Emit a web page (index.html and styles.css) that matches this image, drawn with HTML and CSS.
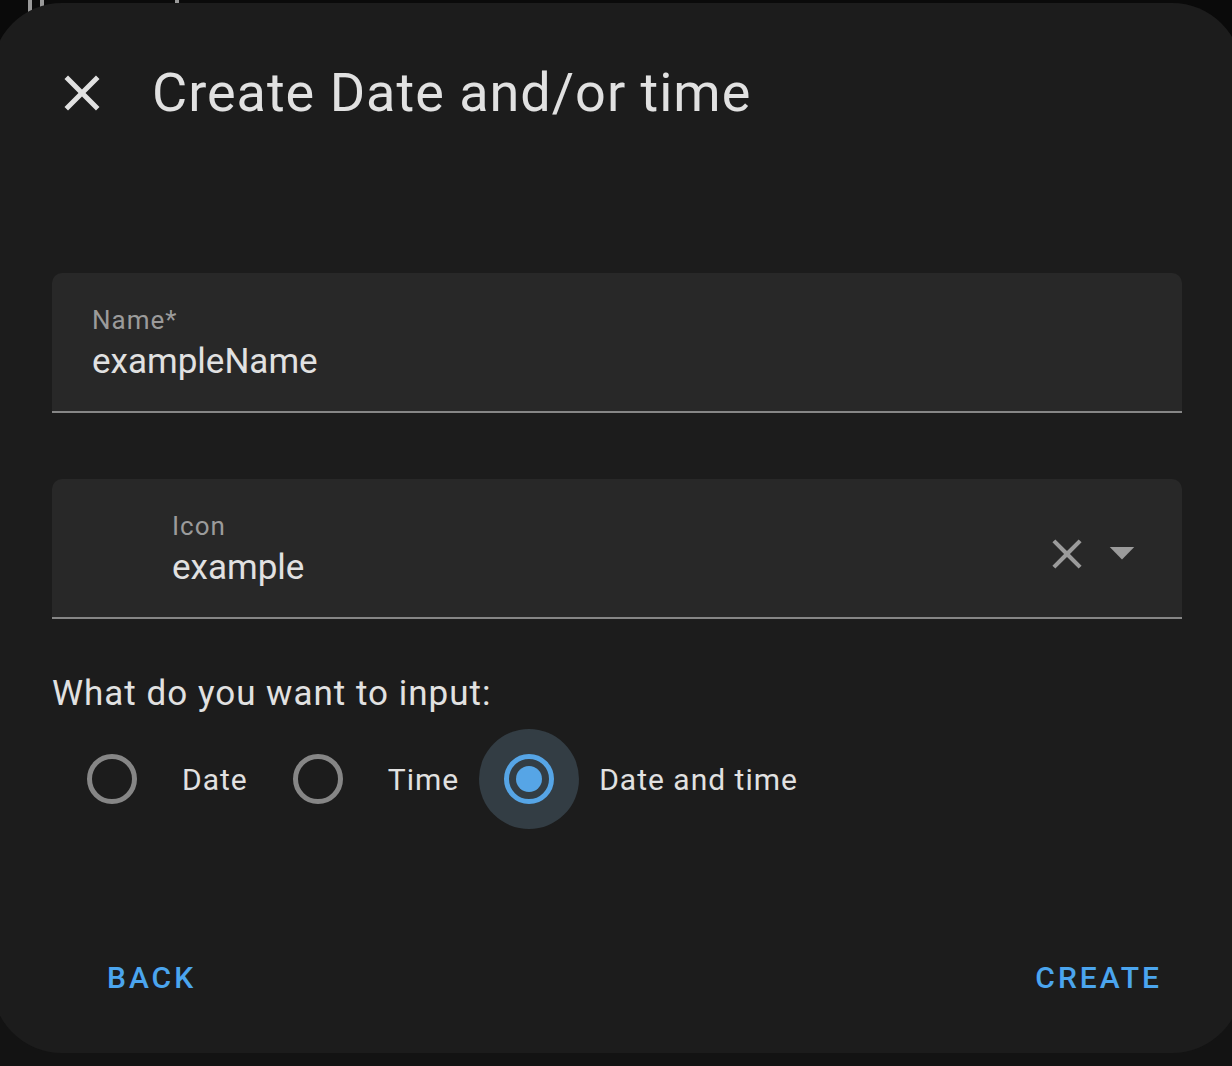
FILE: index.html
```html
<!DOCTYPE html>
<html lang="en">
<head>
<meta charset="utf-8">
<meta name="viewport" content="width=device-width, initial-scale=1">
<title>Create Date and/or time</title>
<link rel="stylesheet" href="styles.css">
</head>
<body>
<div class="backdrop" aria-hidden="true">
  <span class="stroke stroke-first"></span>
  <span class="stroke stroke-second"></span>
  <span class="stroke stroke-third"></span>
</div>
<main class="dialog" role="dialog" aria-labelledby="dialog-title">
  <header class="header">
    <button class="icon-button close" type="button" aria-label="Close">
      <svg viewBox="0 0 24 24"><path d="M19 6.41 17.59 5 12 10.59 6.41 5 5 6.41 10.59 12 5 17.59 6.41 19 12 13.41 17.59 19 19 17.59 13.41 12z"/></svg>
    </button>
    <h1 class="title" id="dialog-title">Create Date and/or time</h1>
  </header>
  <form class="form">
    <div class="field">
      <div class="field-text">
        <label class="field-label" for="name">Name*</label>
        <input class="field-input" id="name" type="text" value="exampleName">
      </div>
    </div>
    <div class="field field-icon">
      <div class="field-text">
        <label class="field-label" for="icon">Icon</label>
        <input class="field-input" id="icon" type="text" role="combobox" aria-expanded="false" value="example">
      </div>
      <div class="field-actions">
        <button class="icon-button clear" type="button" aria-label="Clear">
          <svg viewBox="0 0 24 24"><path d="M19 6.41 17.59 5 12 10.59 6.41 5 5 6.41 10.59 12 5 17.59 6.41 19 12 13.41 17.59 19 19 17.59 13.41 12z"/></svg>
        </button>
        <button class="icon-button toggle" type="button" aria-label="Show icons">
          <svg viewBox="0 0 24 24"><path d="M7.1 9.2 12 14.2 16.9 9.2z"/></svg>
        </button>
      </div>
    </div>
    <fieldset class="choices">
      <legend class="question">What do you want to input:</legend>
      <div class="options">
        <label class="option"><input class="radio" type="radio" name="mode">Date</label>
        <label class="option"><input class="radio" type="radio" name="mode">Time</label>
        <label class="option"><input class="radio" type="radio" name="mode" checked>Date and time</label>
      </div>
    </fieldset>
    <footer class="actions">
      <button class="text-button" type="button">BACK</button>
      <button class="text-button" type="button">CREATE</button>
    </footer>
  </form>
</main>
</body>
</html>
```

FILE: styles.css
```css
* {
  box-sizing: border-box;
}

body {
  margin: 0;
  padding: 3px 0 13px;
  position: relative;
  overflow-x: hidden;
  background: linear-gradient(#0a0a0a 0 50%, #131313 50%);
  color: #e1e1e1;
  font-family: Roboto, "Liberation Sans", sans-serif;
}

/* Page content that shows above the dialog */
.stroke {
  position: absolute;
  top: 0;
  width: 4px;
  background: #999;
}

.stroke-first {
  left: 28px;
  height: 14px;
}

.stroke-second {
  left: 40px;
  height: 8px;
}

.stroke-third {
  left: 175px;
  height: 3px;
}

.dialog {
  position: relative;
  margin: 0 -10px 0 -8px;
  padding: 58px 60px 30px;
  border-radius: 70px;
  background: #1c1c1c;
}

.header {
  display: flex;
  align-items: center;
  gap: 40px;
  margin-bottom: 148px;
}

.title {
  margin: 0;
  font-size: 54px;
  font-weight: 400;
  line-height: 64px;
  letter-spacing: 1px;
}

button {
  border: 0;
  padding: 0;
  background: none;
  color: inherit;
  font-family: inherit;
}

.icon-button {
  display: block;
  flex: none;
}

.icon-button svg {
  display: block;
  width: 100%;
  fill: currentColor;
}

.close,
.toggle {
  width: 60px;
}

.clear {
  width: 50px;
}

.field {
  display: flex;
  margin-bottom: 66px;
  padding: 32px 30px 28px 40px;
  border-bottom: 2px solid #868686;
  border-radius: 10px 10px 0 0;
  background: #282828;
}

.field-icon {
  margin-bottom: 54px;
  padding-left: 120px;
}

.field-text {
  display: flex;
  flex: 1;
  flex-direction: column;
  gap: 6px;
}

.field-label {
  color: #9b9b9b;
  font-size: 26px;
  line-height: 30px;
  letter-spacing: 1px;
}

.field-input {
  width: 100%;
  height: 42px;
  padding: 0;
  border: 0;
  outline: 0;
  background: none;
  color: inherit;
  font: 35px/42px Roboto, "Liberation Sans", sans-serif;
}

.field-actions {
  display: flex;
  align-items: center;
  padding-top: 8px;
  color: #9b9b9b;
}

.choices {
  margin: 0 0 103px;
  padding: 0;
  border: 0;
}

.question {
  padding: 0;
  font-size: 35px;
  line-height: 42px;
  letter-spacing: 1px;
}

.options {
  display: flex;
  flex-wrap: wrap;
  gap: 20px;
  padding: 14px 0 0 10px;
}

.option {
  display: flex;
  align-items: center;
  gap: 20px;
  font-size: 30px;
  letter-spacing: 1px;
}

.radio {
  display: grid;
  place-items: center;
  width: 50px;
  height: 50px;
  margin: 25px;
  border: 5px solid #868686;
  border-radius: 50%;
  appearance: none;
}

.radio:checked {
  border-color: #56a5e6;
  background: #333d44;
  box-shadow: 0 0 0 25px #333d44;
}

.radio:checked::before {
  content: "";
  width: 26px;
  height: 26px;
  border-radius: 50%;
  background: #56a5e6;
}

.actions {
  display: flex;
  justify-content: space-between;
  padding: 0 0 1px 35px;
}

.text-button {
  height: 90px;
  padding: 0 20px;
  color: #4ba5ee;
  font-size: 30px;
  font-weight: 500;
  letter-spacing: 3px;
}
```
